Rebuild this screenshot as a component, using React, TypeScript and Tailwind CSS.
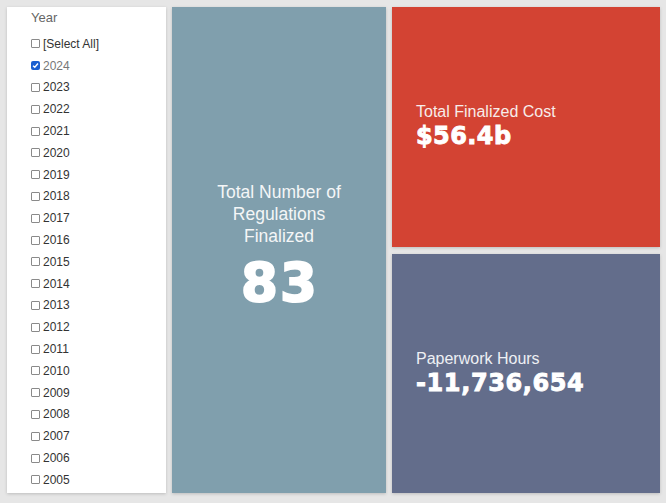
import React from "react";

const years = [
  "2024","2023","2022","2021","2020","2019","2018","2017","2016","2015",
  "2014","2013","2012","2011","2010","2009","2008","2007","2006","2005",
];

function Box({ checked }: { checked?: boolean }) {
  if (checked) {
    return (
      <span className="w-[9px] h-[9px] rounded-[2px] bg-[#1a5fd0] flex items-center justify-center shrink-0">
        <svg width="7" height="7" viewBox="0 0 8 8">
          <path d="M1.2 4.2 L3.2 6 L6.8 1.8" stroke="white" strokeWidth="1.6" fill="none" />
        </svg>
      </span>
    );
  }
  return <span className="w-[9px] h-[9px] rounded-[1px] border border-[#8a8a8a] bg-white shrink-0" />;
}

export default function App() {
  const sans = { fontFamily: '"Liberation Sans", Arial, sans-serif' };
  const heavy = { fontFamily: '"DejaVu Sans", "Liberation Sans", sans-serif' };
  return (
    <div className="w-[666px] h-[503px] bg-[#e6e6e6] flex pt-[7px] pl-[7px] pb-[10px] gap-[6px]" style={sans}>
      <div className="w-[159px] bg-white shadow-[0_1px_3px_rgba(0,0,0,0.18)] flex flex-col pl-[24px] pt-[1px]">
        <div className="text-[13px] text-[#666] leading-[20px] mb-[5px]">Year</div>
        <div className="flex flex-col">
          <div className="h-[21.8px] flex items-center gap-[3px] text-[12px] text-[#333]">
            <Box />
            <span>[Select All]</span>
          </div>
          {years.map((y, i) => (
            <div key={y} className={"h-[21.8px] flex items-center gap-[3px] text-[12px] " + (i === 0 ? "text-[#777]" : "text-[#333]")}>
              <Box checked={i === 0} />
              <span>{y}</span>
            </div>
          ))}
        </div>
      </div>
      <div className="w-[214px] bg-[#809fad] shadow-[0_1px_3px_rgba(0,0,0,0.18)] flex flex-col items-center justify-center pb-[10px] text-[#f4f6f7]">
        <div className="text-[17.5px] leading-[22px] text-center">
          <div>Total Number of</div>
          <div>Regulations</div>
          <div>Finalized</div>
        </div>
        <div className="text-[53px] font-bold leading-[52px] mt-[10px] text-white tracking-[2px] pl-[2px] [-webkit-text-stroke:2px_white]" style={heavy}>83</div>
      </div>
      <div className="w-[268px] flex flex-col gap-[7px]">
        <div className="flex-1 bg-[#d34333] shadow-[0_1px_3px_rgba(0,0,0,0.18)] flex flex-col justify-center pl-[24px] text-white">
          <div className="text-[16px] leading-[19px] text-[#f7ecea]">Total Finalized Cost</div>
          <div className="text-[24px] font-bold leading-[30px] tracking-[0.4px] [-webkit-text-stroke:0.9px_white]" style={heavy}>$56.4b</div>
        </div>
        <div className="flex-1 bg-[#636d8b] shadow-[0_1px_3px_rgba(0,0,0,0.18)] flex flex-col justify-center pl-[24px] text-white">
          <div className="text-[16px] leading-[19px] text-[#eef0f4]">Paperwork Hours</div>
          <div className="text-[24px] font-bold leading-[30px] tracking-[0.6px] [-webkit-text-stroke:0.9px_white]" style={heavy}>-11,736,654</div>
        </div>
      </div>
    </div>
  );
}
